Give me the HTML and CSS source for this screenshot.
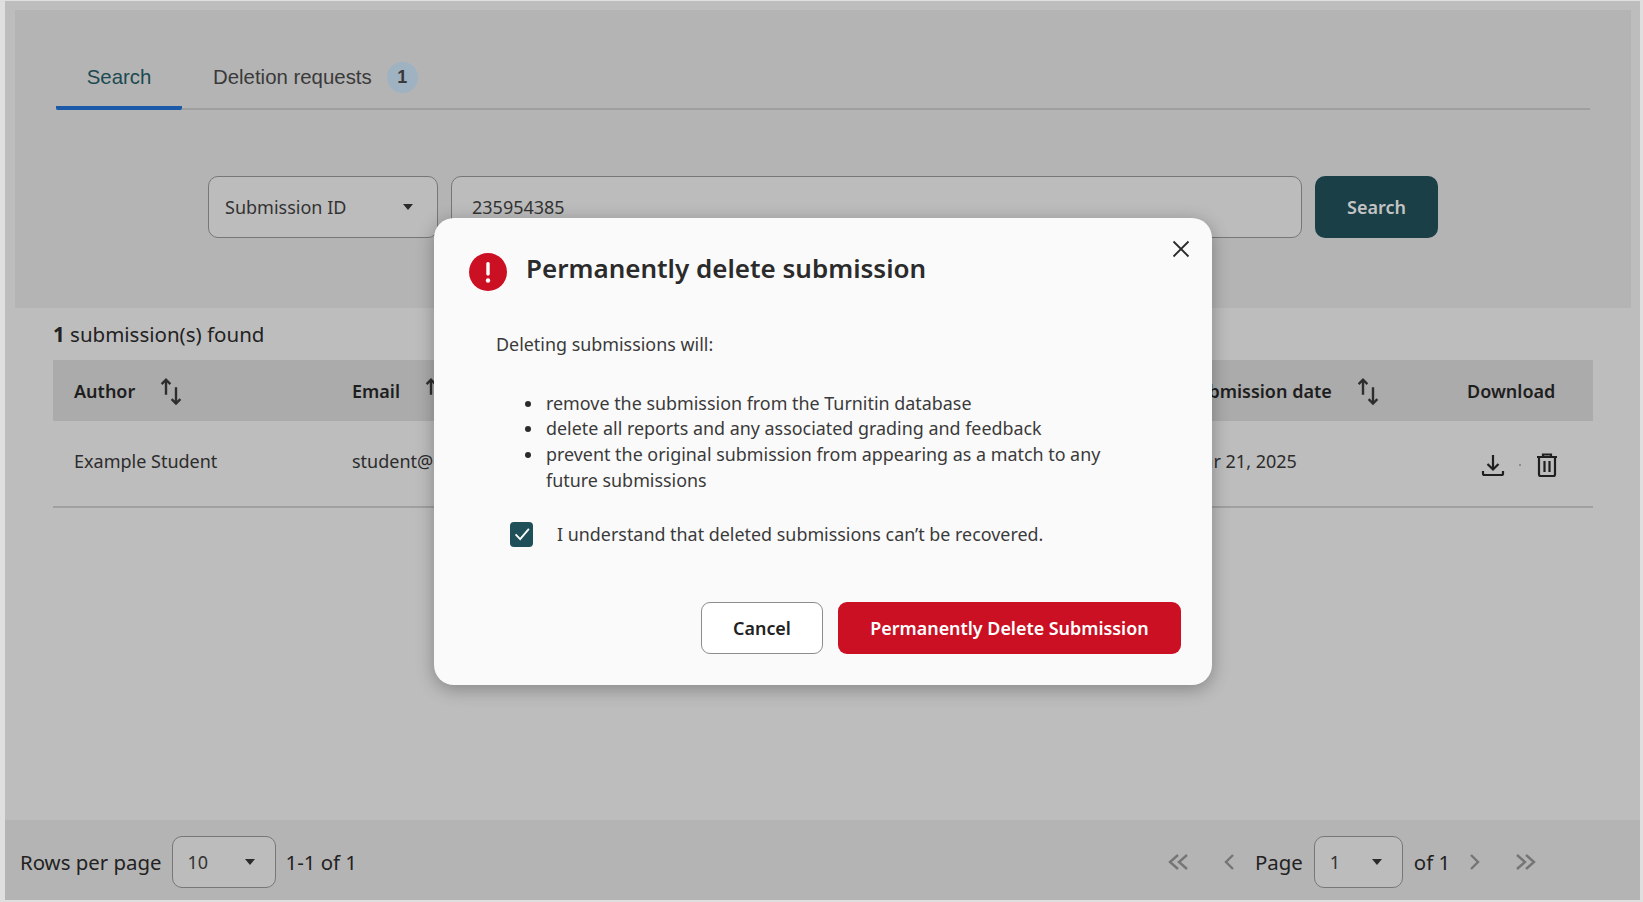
FILE: index.html
```html
<!DOCTYPE html>
<html lang="en">
<head>
<meta charset="utf-8">
<title>Permanently delete submission</title>
<link rel="stylesheet" href="styles.css">
</head>
<body>
<div class="page">
  <section class="search-panel">
    <nav class="tabs">
      <div class="tab tab-active">Search</div>
      <div class="tab tab-plain">Deletion requests <span class="badge">1</span></div>
    </nav>
    <div class="search-row">
      <div class="field select-type"><span>Submission ID</span><i class="caret"></i></div>
      <div class="field input-id"><span>235954385</span></div>
      <div class="btn-search">Search</div>
    </div>
  </section>

  <section class="results">
    <p class="count"><b>1</b> submission(s) found</p>
    <div class="grid grid-head">
      <div class="cell">Author
        <svg class="sort" viewBox="0 0 24 24"><path d="M8 15V3M4.500 6.500L8 3l3.500 3.500M16 9v13M12.500 18.500L16 22l3.500-3.500"/></svg>
      </div>
      <div class="cell">Email
        <svg class="sort" viewBox="0 0 24 24"><path d="M8 15V3M4.500 6.500L8 3l3.500 3.500M16 9v13M12.500 18.500L16 22l3.500-3.500"/></svg>
      </div>
      <div class="cell">Submission date
        <svg class="sort" viewBox="0 0 24 24"><path d="M8 15V3M4.500 6.500L8 3l3.500 3.500M16 9v13M12.500 18.500L16 22l3.500-3.500"/></svg>
      </div>
      <div class="cell">Download</div>
    </div>
    <div class="grid grid-row">
      <div class="cell">Example Student</div>
      <div class="cell">student@example.com</div>
      <div class="cell">Mar 21, 2025</div>
      <div class="cell actions">
        <svg class="act" viewBox="0 0 24 24"><path d="M12 2v14M6.500 11l5.500 5.500 5.500-5.500M2 18v2.500a1.500 1.500 0 0 0 1.500 1.500h17a1.500 1.500 0 0 0 1.500-1.500V18"/></svg>
        <i class="dot"></i>
        <svg class="act" viewBox="0 0 24 24"><path d="M2 4h20M8 4V1.500h8V4M4 4v17.500a1.500 1.500 0 0 0 1.500 1.500h13a1.500 1.500 0 0 0 1.500-1.500V4M9.500 8v11M14.500 8v11"/></svg>
      </div>
    </div>
  </section>

  <footer class="pager">
    <div class="pager-left">
      <span>Rows per page</span>
      <div class="field mini mini-rows"><span>10</span><i class="caret"></i></div>
      <span>1-1 of 1</span>
    </div>
    <div class="pager-right">
      <svg class="nav nav-first" viewBox="0 0 24 24"><path d="M11 5l-8 7 8 7M20 5l-8 7 8 7"/></svg>
      <svg class="nav nav-prev" viewBox="0 0 24 24"><path d="M15 5l-7 7 7 7"/></svg>
      <span class="page-label">Page</span>
      <div class="field mini mini-page"><span>1</span><i class="caret"></i></div>
      <span>of 1</span>
      <svg class="nav nav-next" viewBox="0 0 24 24"><path d="M9 5l7 7-7 7"/></svg>
      <svg class="nav nav-last" viewBox="0 0 24 24"><path d="M4 5l8 7-8 7M13 5l8 7-8 7"/></svg>
    </div>
  </footer>
</div>

<div class="dialog" role="dialog">
  <svg class="close" viewBox="0 0 24 24"><path d="M3 3l18 18M21 3L3 21"/></svg>
  <header class="dialog-head">
    <svg class="alert" viewBox="0 0 38 38"><circle cx="19" cy="19" r="19" fill="#cb1024"/><rect x="17.300" y="9" width="3.400" height="13.500" rx="1.500" fill="#fff"/><circle cx="19" cy="27.500" r="2.200" fill="#fff"/></svg>
    <h2>Permanently delete submission</h2>
  </header>
  <div class="dialog-body">
    <p class="lead">Deleting submissions will:</p>
    <ul class="effects">
      <li>remove the submission from the Turnitin database</li>
      <li>delete all reports and any associated grading and feedback</li>
      <li>prevent the original submission from appearing as a match to any future submissions</li>
    </ul>
    <div class="confirm">
      <span class="check"><svg viewBox="0 0 24 24"><path d="M5 12.500l5 5 9.500-11"/></svg></span>
      <span>I understand that deleted submissions can’t be recovered.</span>
    </div>
  </div>
  <div class="dialog-actions">
    <div class="btn btn-cancel">Cancel</div>
    <div class="btn btn-delete">Permanently Delete Submission</div>
  </div>
</div>
</body>
</html>
```
FILE: styles.css
```css
* { box-sizing: border-box; }
html, body { margin: 0; height: 902px; overflow: hidden; }
body {
  background: #dfdfdf;
  font-family: "Noto Sans", "Open Sans", sans-serif;
  color: #2b2b2b;
  position: relative;
}
.page {
  margin: 1px 3px 2px 5px;
  height: 899px;
  background: #bdbdbd;
  display: flex;
  flex-direction: column;
}
.search-panel {
  margin: 9px 9px 0 10px;
  height: 298px;
  background: #b4b4b4;
  padding: 0 41px;
}
.tabs {
  display: flex;
  height: 100px;
  border-bottom: 2px solid #9f9f9f;
  font-family: "Liberation Sans", Arial, sans-serif;
  font-size: 20.400px;
}
.tab {
  height: 100px;
  display: flex;
  align-items: center;
  padding-top: 34px;
  color: #3a3a3a;
}
.tab-active {
  width: 126px;
  justify-content: center;
  color: #1c4a52;
  padding-top: 38px;
  border-bottom: 4px solid #1a5aa8;
  border-radius: 0 0 2px 2px;
}
.tab-plain { margin-left: 31px; gap: 15px; }
.badge {
  width: 31px;
  height: 31px;
  border-radius: 50%;
  background: #9fb2c2;
  font-size: 18px;
  font-weight: 700;
  display: flex;
  align-items: center;
  justify-content: center;
}
.search-row {
  display: flex;
  gap: 13px;
  margin: 66px 0 0 152px;
  height: 62px;
}
.field {
  display: flex;
  align-items: center;
  justify-content: space-between;
  background: #bcbcbc;
  border: 1.500px solid #777;
  border-radius: 10px;
  font-size: 18px;
  color: #333;
}
.select-type { width: 230px; padding: 0 24px 0 16px; }
.input-id { width: 851px; padding: 0 20px; }
.caret {
  width: 0;
  height: 0;
  border-left: 5px solid transparent;
  border-right: 5px solid transparent;
  border-top: 6px solid #2b2b2b;
}
.btn-search {
  width: 123px;
  background: #1a3f47;
  color: #c4c4c4;
  border-radius: 10px;
  display: flex;
  align-items: center;
  justify-content: center;
  font-size: 18px;
  font-weight: 600;
}
.results { padding: 0 47px 0 48px; }
.count { margin: 12px 0 11px; font-size: 20.500px; line-height: 29px; color: #222; }
.count b { font-weight: 700; }
.grid {
  display: grid;
  grid-template-columns: 278px 835px 280px 1fr;
  padding-left: 21px;
  font-size: 18px;
}
.cell { display: flex; align-items: center; }
.grid-head {
  height: 61px;
  background: #ababab;
  font-weight: 600;
  color: #1e1e1e;
}
.sort {
  width: 30px;
  height: 30px;
  margin-left: 21px;
  fill: none;
  stroke: #2e2e2e;
  stroke-width: 1.900;
}
.grid-row {
  height: 87px;
  border-bottom: 2px solid #a0a0a0;
  color: #2c2c2c;
  padding-bottom: 6px;
}
.actions { padding-left: 14px; padding-top: 8px; gap: 14px; }
.act {
  width: 24px;
  height: 24px;
  fill: none;
  stroke: #1f1f1f;
  stroke-width: 2.200;
}
.dot { width: 2px; height: 2px; background: #8b8b8b; }
.pager {
  margin-top: auto;
  height: 80px;
  background: #b4b4b4;
  display: flex;
  align-items: center;
  justify-content: space-between;
  font-size: 20.400px;
  color: #222;
  padding: 3px 0 0 15px;
}
.pager-left, .pager-right { display: flex; align-items: center; }
.pager-left { gap: 10px; }
.pager-right { width: 501px; }
.mini { height: 52px; font-size: 18px; padding-left: 15px; padding-right: 20px; }
.mini-rows { width: 104px; }
.mini-page { width: 89px; margin: 0 11px 0 11px; }
.nav {
  width: 24px;
  height: 24px;
  fill: none;
  stroke: #757575;
  stroke-width: 2.400;
}
.nav-first { margin-left: 28px; }
.nav-prev { margin-left: 27px; }
.page-label { margin-left: 13px; }
.nav-next { margin-left: 12px; }
.nav-last { margin-left: 27px; }

.dialog {
  position: absolute;
  left: 434px;
  top: 218px;
  width: 778px;
  height: 467px;
  background: #fafafa;
  border-radius: 20px;
  box-shadow: 0 4px 18px rgba(0, 0, 0, .3);
  padding: 35px 31px 31px 35px;
  display: flex;
  flex-direction: column;
}
.close {
  position: absolute;
  right: 21px;
  top: 21px;
  width: 20px;
  height: 20px;
  fill: none;
  stroke: #2b2b2b;
  stroke-width: 2.200;
}
.dialog-head { display: flex; align-items: flex-start; gap: 19px; }
.alert { width: 38px; height: 38px; flex: none; }
.dialog-head h2 {
  margin: -3px 0 0;
  font-size: 26px;
  line-height: 36px;
  font-weight: 600;
  color: #2b2b2b;
}
.dialog-body {
  font-size: 17.900px;
  line-height: 25.700px;
  color: #3a3a3a;
  padding-left: 27px;
}
.lead { margin: 41px 0 33px; }
.effects { margin: 0; padding: 0 0 0 50px; width: 610px; list-style: none; }
.effects li { position: relative; }
.effects li::before {
  content: "";
  position: absolute;
  left: -21px;
  top: 10px;
  width: 6px;
  height: 6px;
  border-radius: 50%;
  background: #2b2b2b;
}
.confirm {
  display: flex;
  align-items: center;
  gap: 24px;
  margin: 28px 0 0 14px;
}
.check {
  width: 23px;
  height: 25px;
  border-radius: 4px;
  background: #1f4f58;
  display: flex;
  align-items: center;
  justify-content: center;
}
.check svg { width: 22px; height: 22px; fill: none; stroke: #fff; stroke-width: 2; }
.dialog-actions {
  margin-top: auto;
  display: flex;
  justify-content: flex-end;
  gap: 15px;
}
.btn {
  height: 52px;
  border-radius: 9px;
  display: flex;
  align-items: center;
  justify-content: center;
  font-size: 17.900px;
  font-weight: 600;
}
.btn-cancel { width: 122px; background: #fff; border: 1.500px solid #8c8c8c; color: #222; }
.btn-delete { width: 343px; background: #cb1024; color: #fff; }
```
